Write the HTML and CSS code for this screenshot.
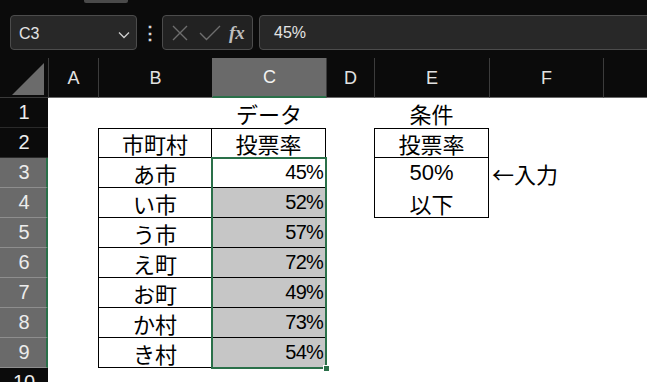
FILE: index.html
```html
<!DOCTYPE html>
<html lang="ja">
<head>
  <meta charset="UTF-8">
  <title>投票率</title>
  <link rel="stylesheet" href="styles.css">
</head>
<body>
  <div class="toolbar">
    <div class="strip"><div class="thumb"></div></div>
    <div class="formula-row">
      <div class="namebox">
        <span>C3</span>
        <svg width="12" height="8" viewBox="0 0 12 8"><path d="M1 1.5 L6 6.5 L11 1.5" fill="none" stroke="#d0d0d0" stroke-width="1.3"/></svg>
      </div>
      <div class="dots">⋮</div>
      <div class="fx-buttons">
        <svg width="18" height="18" viewBox="0 0 18 18"><path d="M2 2 L16 16 M16 2 L2 16" stroke="#6e6e6e" stroke-width="1.4"/></svg>
        <svg width="22" height="18" viewBox="0 0 22 18"><path d="M1 9 L7.5 15.5 L21 2" fill="none" stroke="#6e6e6e" stroke-width="1.4"/></svg>
        <span class="fx">fx</span>
      </div>
      <div class="formula">45%</div>
    </div>
  </div>

  <div class="sheet">
    <!-- column headers -->
    <div class="corner"><svg width="48" height="39" viewBox="0 0 48 39"><polygon points="12,37 44,5 44,37" fill="#6b6b6b"/></svg></div>
    <div class="colhead">A</div>
    <div class="colhead">B</div>
    <div class="colhead sel">C</div>
    <div class="colhead">D</div>
    <div class="colhead">E</div>
    <div class="colhead">F</div>
    <div class="colhead"></div>

    <!-- row 1 -->
    <div class="rowhead">1</div>
    <div class="cell"></div>
    <div class="cell"></div>
    <div class="cell center">データ</div>
    <div class="cell"></div>
    <div class="cell center">条件</div>
    <div class="cell"></div>
    <div class="cell"></div>

    <!-- row 2 -->
    <div class="rowhead">2</div>
    <div class="cell"></div>
    <div class="cell center bt bl br bb">市町村</div>
    <div class="cell center bt br bb">投票率</div>
    <div class="cell"></div>
    <div class="cell center bt bl br bb">投票率</div>
    <div class="cell"></div>
    <div class="cell"></div>

    <!-- row 3 -->
    <div class="rowhead sel">3</div>
    <div class="cell"></div>
    <div class="cell center bl br bb">あ市</div>
    <div class="cell num br bb">45%</div>
    <div class="cell"></div>
    <div class="cell center bl br">50%</div>
    <div class="cell note">←入力</div>
    <div class="cell"></div>

    <!-- row 4 -->
    <div class="rowhead sel">4</div>
    <div class="cell"></div>
    <div class="cell center bl br bb">い市</div>
    <div class="cell num gray br bb">52%</div>
    <div class="cell"></div>
    <div class="cell center bl br bb">以下</div>
    <div class="cell"></div>
    <div class="cell"></div>

    <!-- row 5 -->
    <div class="rowhead sel">5</div>
    <div class="cell"></div>
    <div class="cell center bl br bb">う市</div>
    <div class="cell num gray br bb">57%</div>
    <div class="cell"></div>
    <div class="cell"></div>
    <div class="cell"></div>
    <div class="cell"></div>

    <!-- row 6 -->
    <div class="rowhead sel">6</div>
    <div class="cell"></div>
    <div class="cell center bl br bb">え町</div>
    <div class="cell num gray br bb">72%</div>
    <div class="cell"></div>
    <div class="cell"></div>
    <div class="cell"></div>
    <div class="cell"></div>

    <!-- row 7 -->
    <div class="rowhead sel">7</div>
    <div class="cell"></div>
    <div class="cell center bl br bb">お町</div>
    <div class="cell num gray br bb">49%</div>
    <div class="cell"></div>
    <div class="cell"></div>
    <div class="cell"></div>
    <div class="cell"></div>

    <!-- row 8 -->
    <div class="rowhead sel">8</div>
    <div class="cell"></div>
    <div class="cell center bl br bb">か村</div>
    <div class="cell num gray br bb">73%</div>
    <div class="cell"></div>
    <div class="cell"></div>
    <div class="cell"></div>
    <div class="cell"></div>

    <!-- row 9 -->
    <div class="rowhead sel">9</div>
    <div class="cell"></div>
    <div class="cell center bl br bb">き村</div>
    <div class="cell num gray br bb">54%</div>
    <div class="cell"></div>
    <div class="cell"></div>
    <div class="cell"></div>
    <div class="cell"></div>

    <!-- row 10 -->
    <div class="rowhead">10</div>
    <div class="cell"></div>
    <div class="cell"></div>
    <div class="cell"></div>
    <div class="cell"></div>
    <div class="cell"></div>
    <div class="cell"></div>
    <div class="cell"></div>

    <!-- selection outline over C3:C9 -->
    <div class="selection"><span class="handle"></span></div>
  </div>
</body>
</html>
```

FILE: styles.css
```css
body {
  margin: 0;
  background: #0b0b0b;
  font-family: "Liberation Sans", "Noto Sans CJK JP", sans-serif;
  overflow: hidden;
}

.toolbar {
  height: 58px;
}

.strip {
  height: 15px;
}

.thumb {
  margin-left: 84px;
  width: 44px;
  height: 3px;
  background: #4a4a4a;
  border-radius: 0 0 2px 2px;
}

.formula-row {
  display: flex;
  height: 35px;
  padding-left: 10px;
}

.namebox {
  width: 127px;
  box-sizing: border-box;
  background: #282828;
  border: 1px solid #4c4c4c;
  border-radius: 4px;
  display: flex;
  align-items: center;
  justify-content: space-between;
  padding: 2px 6px 0 8px;
  color: #e4e4e4;
  font-size: 16px;
}

.namebox svg {
  margin-top: 2px;
}

.dots {
  width: 25px;
  color: #d8d8d8;
  font-size: 18px;
  font-weight: bold;
  display: flex;
  align-items: center;
  justify-content: center;
}

.fx-buttons {
  width: 91px;
  box-sizing: border-box;
  background: #222;
  border: 1px solid #4c4c4c;
  border-radius: 4px;
  display: flex;
  align-items: center;
  gap: 10px;
  padding-left: 8px;
}

.fx {
  font-family: "Liberation Serif", serif;
  font-style: italic;
  font-weight: bold;
  font-size: 19px;
  color: #bdbdbd;
  margin-left: -2px;
}

.formula {
  flex: 1;
  margin-left: 6px;
  margin-right: -10px;
  background: #282828;
  border: 1px solid #4c4c4c;
  border-radius: 4px;
  color: #e4e4e4;
  font-size: 16px;
  display: flex;
  align-items: center;
  padding-left: 14px;
  padding-top: 1px;
}

.sheet {
  display: grid;
  grid-template-columns: 48px 50px 114px 114px 48px 115px 114px 1fr;
  grid-template-rows: 40px repeat(10, 30px);
  position: relative;
}

.corner {
  border-bottom: 1px solid #3a3a3a;
}

.corner svg {
  display: block;
}

.colhead {
  color: #e2e2e2;
  font-size: 18px;
  display: flex;
  align-items: center;
  justify-content: center;
  border-left: 1px solid #3c3c3c;
  border-bottom: 1px solid #6a6a6a;
  padding-top: 1px;
}

.colhead.sel {
  background: #6a6a6a;
  border-left: 1px solid #6a6a6a;
  border-bottom: 2px solid #2a7049;
  color: #f2f2f2;
}

.rowhead {
  color: #ececec;
  font-size: 20px;
  display: flex;
  align-items: center;
  justify-content: center;
  border-bottom: 1px solid #2a2a2a;
  box-sizing: border-box;
}

.rowhead.sel {
  background: #6a6a6a;
  border-bottom: 1px solid #8e8e8e;
  border-right: 2px solid #2a7049;
  padding-left: 2px;
}

.cell {
  background: #fff;
  color: #000;
  font-size: 22px;
  display: flex;
  align-items: center;
  box-sizing: border-box;
}

.center {
  justify-content: center;
}

.num {
  justify-content: flex-end;
  padding-right: 2px;
  font-size: 20px;
  letter-spacing: -0.8px;
}

.gray {
  background: #c6c6c6;
}

.note {
  font-family: "Noto Sans CJK JP", sans-serif;
  padding-left: 3px;
  white-space: nowrap;
}

.bt { border-top: 1px solid #000; }
.bl { border-left: 1px solid #000; }
.br { border-right: 1px solid #000; }
.bb { border-bottom: 1px solid #000; }

.selection {
  position: absolute;
  left: 211px;
  top: 99px;
  width: 116px;
  height: 212px;
  box-sizing: border-box;
  border: 2px solid #2a7049;
  pointer-events: none;
}

.handle {
  position: absolute;
  right: -5px;
  bottom: -5px;
  width: 5px;
  height: 5px;
  background: #2a7049;
  border: 1px solid #fff;
}
```
